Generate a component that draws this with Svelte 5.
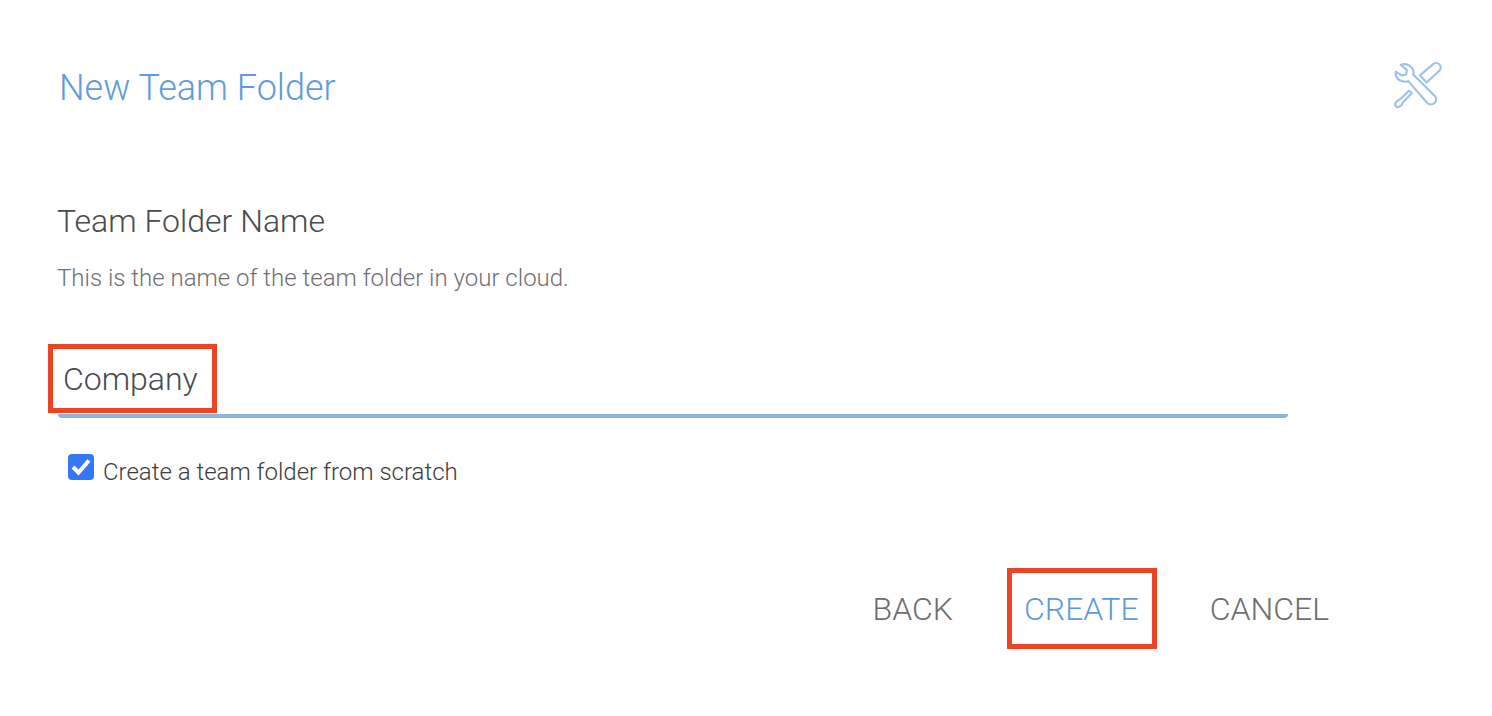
<script lang="ts">
  let name = $state('Company');
  let scratch = $state(true);
</script>

<div class="panel">
  <header class="top">
    <h1>New Team Folder</h1>
    <svg class="tools" width="50" height="50" viewBox="-1 -1 52 52" fill="none" aria-hidden="true">
      <path d="M3 11C2.500 15 4 18.500 7 20C10 21.700 13 22 16 21L35 43C37 45.500 40.500 46 43 44C45.500 42 45.500 38.500 43.500 36.500L21 14C22 10.500 20.500 7 17.500 5C14.500 3 11 3 8 4.200L14.500 9.500L13.800 14L9 15Z" stroke="currentColor" stroke-width="2.200" stroke-linejoin="round"/>
      <path d="M28 15L41.500 3.500C43.500 1.500 46.500 1.800 48.200 3.500C50 5.500 50 8 48.500 10L35 22.500Z" stroke="currentColor" stroke-width="2.200" stroke-linejoin="round"/>
      <path d="M16.500 31L19.500 33.500L10 43.500L9 46L5.500 48C4 48.500 2.800 47.500 2.500 46C2.200 44.500 2.800 43 4 42L7 40L8.500 39Z" stroke="currentColor" stroke-width="2.200" stroke-linejoin="round"/>
    </svg>
  </header>

  <section class="body">
    <h2>Team Folder Name</h2>
    <p>This is the name of the team folder in your cloud.</p>

    <div class="field">
      <input type="text" bind:value={name} aria-label="Team Folder Name" />
      <span class="mark mark-input"></span>
    </div>

    <label class="check">
      <input type="checkbox" bind:checked={scratch} />
      <span class="box">
        {#if scratch}
          <svg width="26" height="26" viewBox="0 0 26 26" fill="none">
            <path d="M5 13L10.500 18.500L21 6.500" stroke="#fff" stroke-width="4"/>
          </svg>
        {/if}
      </span>
      <span class="check-text">Create a team folder from scratch</span>
    </label>
  </section>

  <footer class="actions">
    <button>BACK</button>
    <button class="primary">CREATE<span class="mark mark-btn"></span></button>
    <button>CANCEL</button>
  </footer>
</div>

<style>
  :global(body) {
    margin: 0;
    background: #fff;
  }
  .panel {
    width: 1492px;
    height: 716px;
    box-sizing: border-box;
    padding: 60px 50px 0 58px;
    font-family: Roboto, "Liberation Sans", sans-serif;
    overflow: hidden;
  }
  .top {
    display: flex;
    justify-content: space-between;
    align-items: flex-start;
  }
  h1 {
    margin: 0 0 0 1px;
    font-size: 36px;
    line-height: 56px;
    font-weight: 300;
    color: #5f9bdc;
  }
  .tools {
    color: #9cc2ea;
  }
  .body {
    padding-top: 85px;
  }
  h2 {
    margin: 0 0 0 -1px;
    font-size: 32px;
    line-height: 40px;
    font-weight: 300;
    color: #4a4a4a;
  }
  p {
    margin: 21px 0 0 -1px;
    font-size: 24px;
    line-height: 32px;
    font-weight: 300;
    color: #6f6f73;
  }
  .field {
    position: relative;
    width: 1230px;
    margin-top: 50px;
  }
  .field input {
    display: block;
    width: 100%;
    height: 74px;
    box-sizing: border-box;
    padding: 0 5px;
    border: 0;
    border-bottom: 4px solid #8fb3dd;
    border-radius: 0 0 4px 4px;
    outline: none;
    background: transparent;
    font-family: inherit;
    font-size: 32px;
    font-weight: 300;
    color: #454b52;
  }
  .mark {
    position: absolute;
    box-sizing: border-box;
    border: 5px solid #ee4423;
    pointer-events: none;
  }
  .mark-input {
    left: -10px;
    top: 0;
    width: 169px;
    height: 69px;
  }
  .check {
    display: flex;
    align-items: center;
    gap: 9px;
    margin: 40px 0 0 10px;
    height: 28px;
  }
  .check input {
    position: absolute;
    opacity: 0;
    width: 0;
    height: 0;
  }
  .box {
    width: 26px;
    height: 26px;
    margin-top: -10px;
    border-radius: 4px;
    background: #3478f6;
    display: flex;
  }
  .check-text {
    font-size: 24px;
    font-weight: 300;
    color: #3c3c3c;
  }
  .actions {
    display: flex;
    justify-content: flex-end;
    gap: 71px;
    width: 1271px;
    margin-top: 103px;
  }
  button {
    position: relative;
    padding: 0;
    border: 0;
    background: none;
    font-family: inherit;
    font-size: 32px;
    line-height: 40px;
    font-weight: 300;
    color: #6e6e6e;
    cursor: pointer;
  }
  .primary {
    color: #5f9bdc;
  }
  .mark-btn {
    left: -17px;
    top: -21px;
    width: 150px;
    height: 81px;
  }
</style>
